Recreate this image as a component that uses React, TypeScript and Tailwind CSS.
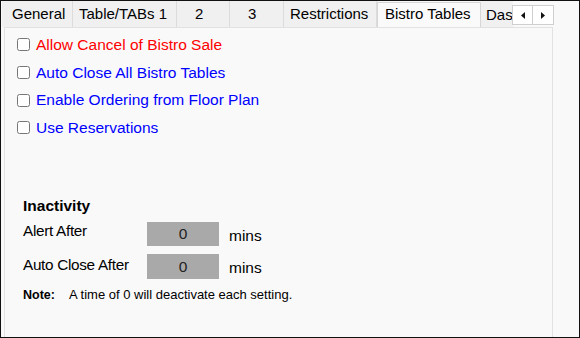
import React from "react";

const tabs = [
  { label: "General", w: 71, pl: 10 },
  { label: "Table/TABs 1", w: 104, pl: 6 },
  { label: "2", w: 53, pl: 18 },
  { label: "3", w: 54, pl: 18 },
  { label: "Restrictions", w: 93, pl: 6 },
];

export default function App() {
  return (
    <div className="w-[580px] h-[338px] border border-[#111] bg-[#f9f9f9] overflow-hidden flex flex-col font-['Liberation_Sans',Arial,sans-serif] text-black">
      {/* tab row */}
      <div className="relative h-[26px] flex items-stretch pl-[1px] shrink-0 overflow-hidden">
        {tabs.map((t) => (
          <div
            key={t.label}
            style={{ width: t.w, paddingLeft: t.pl }}
            className="shrink-0 bg-[#f0f0f0] border-r border-[#dcdcdc] text-[15px] leading-[26px] whitespace-nowrap"
          >
            {t.label}
          </div>
        ))}
        <div className="shrink-0 w-[104px] mt-[1px] h-[26px] bg-[#fafafa] border border-b-0 border-[#d6d6d6] text-[15px] leading-[22px] pl-[7px] whitespace-nowrap relative z-10">
          Bistro Tables
        </div>
        <div className="shrink-0 w-[32px] bg-[#f0f0f0] text-[15px] leading-[28px] pl-[5px] whitespace-nowrap">
          Das
        </div>
        <div className="absolute left-[511px] top-[4px] flex z-20">
          <div className="w-[21px] h-[20px] bg-white border border-[#cfcfcf] flex items-center justify-center">
            <svg width="4" height="7" viewBox="0 0 4 7"><path d="M4 0 L0 3.5 L4 7 Z" fill="#111" /></svg>
          </div>
          <div className="w-[21px] h-[20px] bg-white border border-l-0 border-[#cfcfcf] flex items-center justify-center">
            <svg width="4" height="7" viewBox="0 0 4 7"><path d="M0 0 L4 3.5 L0 7 Z" fill="#111" /></svg>
          </div>
        </div>
      </div>

      {/* panel */}
      <div className="flex flex-1">
        <div className="ml-[3px] w-[549px] border border-b-0 border-[#e2e2e2] bg-[#f9f9f9] flex flex-col pt-[3px]">
          <div className="flex flex-col pl-[12px]">
            {[
              { t: "Allow Cancel of Bistro Sale", c: "text-[#ff0000]" },
              { t: "Auto Close All Bistro Tables", c: "text-[#0000ff]" },
              { t: "Enable Ordering from Floor Plan", c: "text-[#0000ff]" },
              { t: "Use Reservations", c: "text-[#0000ff]" },
            ].map((r) => (
              <label key={r.t} className="h-[27.7px] flex items-center gap-[6px]">
                <input type="checkbox" className="w-[13px] h-[13px] m-0" />
                <span className={`text-[15.5px] leading-[18px] ${r.c}`}>{r.t}</span>
              </label>
            ))}
          </div>

          <div className="pl-[18px] mt-[55px] flex flex-col">
            <div className="text-[15.5px] leading-[18px] font-bold">Inactivity</div>
            <div className="flex mt-[7px] h-[24px]">
              <div className="w-[124px] text-[15.3px] leading-[18px] tracking-[-0.3px]">Alert After</div>
              <div className="w-[72px] h-[24px] bg-[#a9a9a9] flex items-center justify-center text-[15.5px] text-[#222]">0</div>
              <div className="ml-[10px] pt-[5px] text-[15.5px] leading-[18px]">mins</div>
            </div>
            <div className="flex mt-[8px] h-[25px]">
              <div className="w-[124px] pt-[2px] text-[15.3px] leading-[18px] tracking-[-0.3px]">Auto Close After</div>
              <div className="w-[72px] h-[25px] bg-[#a9a9a9] flex items-center justify-center text-[15.5px] text-[#222]">0</div>
              <div className="ml-[10px] pt-[5px] text-[15.5px] leading-[18px]">mins</div>
            </div>
            <div className="flex mt-[8px] text-[12.5px] leading-[16px]">
              <span className="w-[46px] font-bold">Note:</span>
              <span className="text-[13px]">A time of 0 will deactivate each setting.</span>
            </div>
          </div>
        </div>
      </div>
    </div>
  );
}
